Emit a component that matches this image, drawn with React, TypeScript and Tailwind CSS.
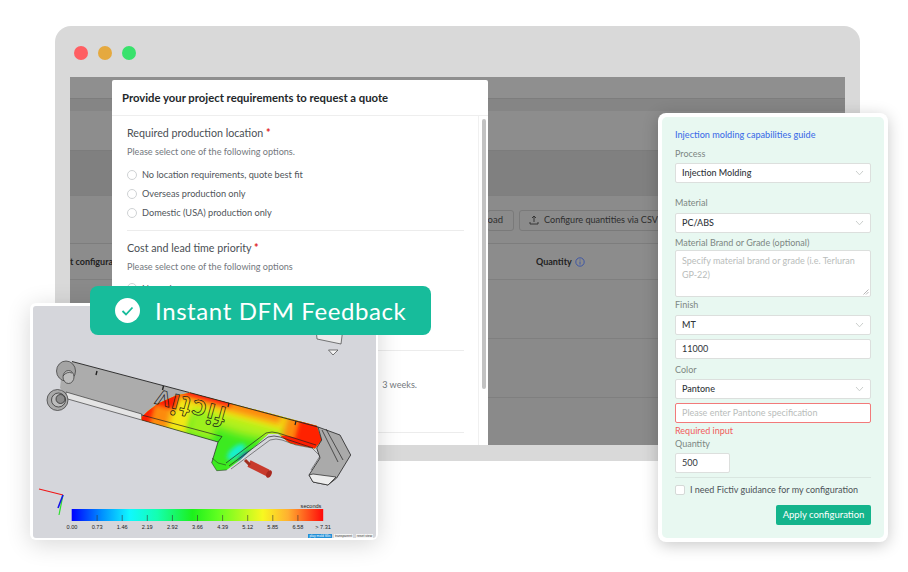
import React from "react";

function Chevron() {
  return (
    <svg width="9" height="6" viewBox="0 0 9 6" className="ml-auto shrink-0">
      <path d="M1 1l3.5 3.8L8 1" fill="none" stroke="#c4c8c6" strokeWidth="0.9" />
    </svg>
  );
}

function Label({ children, className = "" }: { children: React.ReactNode; className?: string }) {
  return <div className={`text-[9px] leading-[12px] text-[#7d8783] ${className}`}>{children}</div>;
}

function Select({ value, className = "" }: { value: string; className?: string }) {
  return (
    <div className={`flex h-[20px] items-center rounded-[2px] border border-[#dcdfdd] bg-white pl-[6px] pr-[6px] text-[9px] font-medium text-[#30353a] ${className}`}>
      <span>{value}</span>
      <Chevron />
    </div>
  );
}

function Radio({ label }: { label: string }) {
  return (
    <div className="flex h-[18.7px] items-center gap-[5px] text-[9.2px] text-[#50555a]">
      <span className="h-[10px] w-[10px] rounded-full border border-[#cfd2d4] bg-white" />
      {label}
    </div>
  );
}

function DfmPart() {
  const heat =
    "M141.7 420 L141.7 417 L148 411 L158 403.5 L176 395.5 L190 392.7 L316.7 425.7 L321.7 440 L315 448.5 L290 443.3 L278.3 434 L268.3 434 L240 460 L226.7 470 L216.7 470.7 L211.7 462.7 L218 442 Z";
  const ticks = Array.from({ length: 9 }, (_, i) => 72 + (i + 1) * 25.1);
  const labels = ["0.00", "0.73", "1.46", "2.19", "2.92", "3.66", "4.39", "5.12", "5.85", "6.58", "> 7.31"];
  return (
    <svg viewBox="33 306 343 232" className="block h-full w-full">
      <defs>
        <clipPath id="heatClip"><path d={heat} /></clipPath>
        <filter id="b5" x="-50%" y="-50%" width="200%" height="200%"><feGaussianBlur stdDeviation="5" /></filter>
        <filter id="b3" x="-50%" y="-50%" width="200%" height="200%"><feGaussianBlur stdDeviation="3" /></filter>
        <filter id="b2" x="-50%" y="-50%" width="200%" height="200%"><feGaussianBlur stdDeviation="2" /></filter>
        <linearGradient id="bar" x1="0" x2="1" y1="0" y2="0">
          <stop offset="0" stopColor="#0000ff" />
          <stop offset="0.12" stopColor="#0090ff" />
          <stop offset="0.23" stopColor="#10f8ff" />
          <stop offset="0.34" stopColor="#14ffb0" />
          <stop offset="0.48" stopColor="#1cf01c" />
          <stop offset="0.58" stopColor="#60ff20" />
          <stop offset="0.76" stopColor="#f8f820" />
          <stop offset="0.86" stopColor="#ffb030" />
          <stop offset="1" stopColor="#ff0a0a" />
        </linearGradient>
      </defs>

      {/* grey plate */}
      <path d="M64 392 L60 388 L62 370 L72 361.5 L190 392.7 L176 395.5 L158 403.5 L148 411 L141.7 417 Z" fill="#acacac" />
      <path d="M66 392 L141.7 414 L141.7 420 L66 398.5 Z" fill="#e4e4e4" stroke="#222" strokeWidth="0.6" />
      <path d="M72 361.5 L190 392.7" stroke="#222" strokeWidth="0.9" fill="none" />
      {/* lugs */}
      <ellipse cx="66" cy="371" rx="9.5" ry="10" fill="#a4a4a4" stroke="#333" strokeWidth="0.7" />
      <ellipse cx="68.5" cy="377" rx="5.5" ry="6.5" fill="#bdbdbd" stroke="#333" strokeWidth="0.7" />
      <path d="M63 376 q4 -5 9 -3" fill="none" stroke="#444" strokeWidth="0.8" />
      <ellipse cx="57.5" cy="400" rx="10.5" ry="10.5" fill="#a9a9a9" stroke="#333" strokeWidth="0.7" />
      <ellipse cx="58.5" cy="400" rx="7" ry="7" fill="#bcbcbc" stroke="#222" strokeWidth="0.7" />
      <ellipse cx="60.5" cy="399" rx="4.5" ry="4.5" fill="#8c8c8c" stroke="#222" strokeWidth="0.7" />
      <path d="M97 371 l-1 4 M163.5 386 l-1 4" stroke="#222" strokeWidth="1.4" />

      {/* heat map, drawn in plate-aligned coordinates */}
      <g clipPath="url(#heatClip)">
        <rect x="130" y="385" width="200" height="95" fill="#3cea20" />
        <g transform="translate(190 393) rotate(15)">
          <ellipse cx="60" cy="12" rx="62" ry="15" fill="#b4f01c" filter="url(#b5)" />
          <rect x="-30" y="-10" width="135" height="22" fill="#f2e814" filter="url(#b3)" />
          <rect x="-55" y="-5" width="63" height="48" fill="#f2e814" filter="url(#b3)" />
          <rect x="8" y="18" width="26" height="22" fill="#9cf01c" filter="url(#b3)" />
          <rect x="-55" y="5" width="42" height="38" fill="#fd8a10" filter="url(#b3)" />
          <rect x="-30" y="-8" width="125" height="15" fill="#fd8a10" filter="url(#b3)" />
          <rect x="-30" y="-8" width="72" height="11" fill="#ff2208" filter="url(#b2)" />
          <rect x="-55" y="-5" width="45" height="25" fill="#ff1a06" filter="url(#b2)" />
          <rect x="-55" y="15" width="24" height="28" fill="#ff1a06" filter="url(#b2)" />
          <rect x="100" y="-10" width="40" height="50" fill="#fd8a10" filter="url(#b3)" />
          <rect x="113" y="-10" width="30" height="50" fill="#ff2206" filter="url(#b2)" />
        </g>
        <ellipse cx="236" cy="452" rx="11" ry="5" fill="#18f0d0" filter="url(#b2)" transform="rotate(-40 236 452)" />
        <ellipse cx="245" cy="457" rx="8" ry="3" fill="#0a50f0" filter="url(#b2)" transform="rotate(-40 245 457)" />
        <ellipse cx="296" cy="441" rx="18" ry="3" fill="#ff1c00" transform="rotate(14 296 441)" />
      </g>
      <path d="M190 392.7 L318 427" stroke="#222" strokeWidth="0.9" fill="none" />
      <path d="M141.7 415 L222 436.5 M141.7 420 L218 442 M222 436.5 L218 442 L211.7 462.7" stroke="#222" strokeWidth="0.7" fill="none" />
      <path d="M211.7 462.7 L216.7 470.7 L226.7 470 M212 458 L218 463 L226 465" stroke="#222" strokeWidth="0.5" fill="none" />
      <path d="M226 463 L266 433 Q272 431 278 433 L316 445" stroke="#222" strokeWidth="0.7" fill="none" />
      <path d="M229 466 L268 437 Q274 435 280 437 L313 448" stroke="#222" strokeWidth="0.7" fill="none" />
      <path d="M231 469 L270 440 Q276 438 282 440 L296 445" stroke="#222" strokeWidth="0.5" fill="none" />
      <path d="M229 403 l-1 4 M296 421 l-1 4" stroke="#222" strokeWidth="1.2" />

      {/* logo */}
      <g transform="translate(190 407) rotate(195)">
        <text x="0" y="9" textAnchor="middle" fontFamily="Lato, sans-serif" fontWeight="700" fontSize="29" letterSpacing="1.5" fill="none" stroke="#1a1a1a" strokeWidth="0.7">fictiv</text>
      </g>

      {/* gate */}
      <path d="M249 463.5 L268 473" stroke="#c83a2c" strokeWidth="7" />
      <ellipse cx="269" cy="474" rx="2.5" ry="4" fill="#a8281e" transform="rotate(25 269 474)" />
      <path d="M245 460 L250 465" stroke="#a03020" strokeWidth="3" />

      {/* right grey hook */}
      <path d="M318 427 L340 435 L350.7 455 L336.7 478 L328 485 L313 482 L309 475 L320 458 L316.7 448 L321.7 440 Z" fill="#aaaaaa" stroke="#222" strokeWidth="0.8" />
      <path d="M326 429 L343 460 M322 430 L338 462" stroke="#222" strokeWidth="0.7" fill="none" />
      <path d="M309 475 L313 482 L328 485 L336 477 L313 474 Z" fill="#ededed" stroke="#222" strokeWidth="0.7" />
      <path d="M296 445 L312 448 L320 456 L311 470" fill="none" stroke="#444" strokeWidth="0.6" />

      {/* view cube */}
      <path d="M316 328 L343 328 L341 344 L317 339 Z" fill="#ebebeb" stroke="#444" strokeWidth="0.7" />
      <path d="M328.5 350 L338 350 L333 355 Z" fill="#f4f4f4" stroke="#444" strokeWidth="0.7" />

      {/* axes */}
      <path d="M39 489 L63 495" stroke="#f01414" strokeWidth="1.2" />
      <path d="M63 495 L59 515" stroke="#2ee02e" strokeWidth="1.2" />
      <path d="M63 495 L58 508" stroke="#1414e8" strokeWidth="1.6" />

      {/* colour scale */}
      <rect x="71.7" y="509" width="251.5" height="12" fill="url(#bar)" />
      {ticks.map((x) => (
        <line key={x} x1={x} x2={x} y1="515" y2="521" stroke="#333" strokeWidth="0.6" />
      ))}
      {labels.map((t, i) => (
        <text key={t} x={72 + i * 25.1} y="529" textAnchor="middle" fontFamily="Liberation Sans, sans-serif" fontSize="5.6" fill="#222">{t}</text>
      ))}
      <text x="311" y="508" textAnchor="middle" fontFamily="Liberation Sans, sans-serif" fontSize="5.6" fill="#222">seconds</text>

      {/* buttons */}
      <rect x="308" y="534" width="24" height="4" fill="#2390d8" />
      <text x="320" y="537.3" textAnchor="middle" fontFamily="Liberation Sans, sans-serif" fontSize="3.4" fill="#fff">play mold fillis</text>
      <rect x="334" y="534" width="19" height="4" fill="#f5f5f5" />
      <text x="343.5" y="537.3" textAnchor="middle" fontFamily="Liberation Sans, sans-serif" fontSize="3.4" fill="#333">transparent</text>
      <rect x="356" y="534" width="17" height="4" fill="#f5f5f5" />
      <text x="364.5" y="537.3" textAnchor="middle" fontFamily="Liberation Sans, sans-serif" fontSize="3.4" fill="#333">reset view</text>
    </svg>
  );
}

export default function App() {
  return (
    <div className="relative h-[572px] w-[908px] overflow-hidden bg-white font-['Lato','Noto_Sans',sans-serif]">
      {/* Browser window */}
      <div className="absolute left-[55px] top-[26px] flex h-[435px] w-[805px] flex-col rounded-t-[16px] bg-[#d9d9d9] px-[15px]">
        <div className="flex h-[51px] shrink-0 items-center gap-[10px] pl-[4px] pt-[3px]">
          <span className="h-[14px] w-[14px] rounded-full bg-[#ff5f63]" />
          <span className="h-[14px] w-[14px] rounded-full bg-[#e5a93f]" />
          <span className="h-[14px] w-[14px] rounded-full bg-[#39e26c]" />
        </div>
        <div className="flex h-[368px] flex-col text-[#222]">
          <div className="h-[22px] border-b border-[#7d7d7d] bg-[#8f8f8f]" />
          <div className="h-[12px] bg-[#858585]" />
          <div className="h-[40px] border-b border-[#7c7c7c] bg-[#8d8d8d]" />
          <div className="h-[45px] border-b border-[#7f7f7f] bg-[#808080]" />
          <div className="flex h-[48px] items-center justify-end border-b border-[#7d7d7d] bg-[#8b8b8b] pt-[1px]">
            <div className="mr-[5px] flex h-[21px] items-center rounded-[3px] border border-[#7a7a7a] pr-[10px] text-[9.5px] text-[#2e2e2e]">oad</div>
            <div className="flex h-[21px] w-[326px] items-center gap-[5px] rounded-l-[3px] border border-[#7a7a7a] pl-[9px] text-[9.1px] text-[#2e2e2e]">
              <svg width="10" height="10" viewBox="0 0 10 10" fill="none" stroke="#2e2e2e" strokeWidth="0.9">
                <path d="M5 7V1.5M3 3l2-2 2 2M1 7v2h8V7" />
              </svg>
              Configure quantities via CSV
            </div>
          </div>
          <div className="flex h-[36px] items-center border-b border-[#7f7f7f] bg-[#8c8c8c] pt-[1px] text-[9px] font-bold text-[#222]">
            <span className="w-[466px] overflow-hidden whitespace-nowrap">t configuration</span>
            <span>Quantity</span>
            <svg width="10" height="10" viewBox="0 0 10 10" className="ml-[3px]" fill="none" stroke="#3550a8" strokeWidth="0.9">
              <circle cx="5" cy="5" r="4.2" />
              <path d="M5 4.5V7.5M5 2.5v1" />
            </svg>
          </div>
          <div className="h-[59px] border-b border-[#7f7f7f] bg-[#8a8a8a]" />
          <div className="h-[59px] border-b border-[#7f7f7f] bg-[#8a8a8a]" />
          <div className="h-[47px] bg-[#8a8a8a]" />
        </div>
      </div>

      {/* Quote modal */}
      <div className="absolute left-[112px] top-[80px] flex h-[365px] w-[376px] flex-col rounded-t-[2px] bg-white">
        <div className="flex h-[36px] shrink-0 items-center border-b border-[#eeeeee] pl-[10px] pt-[1px] text-[11.3px] font-bold text-[#23272a]">
          Provide your project requirements to request a quote
        </div>
        <div className="flex min-h-0 flex-1">
          <div className="min-w-0 flex-1 pl-[15px] pr-[14px] pt-[10px]">
            <div className="text-[10.7px] leading-[14px] text-[#4a4f54]">
              Required production location <span className="font-bold text-[#e02020]">*</span>
            </div>
            <div className="mt-[5px] text-[9.1px] leading-[14px] text-[#74797e]">Please select one of the following options.</div>
            <div className="mt-[7px]">
              <Radio label="No location requirements, quote best fit" />
              <Radio label="Overseas production only" />
              <Radio label="Domestic (USA) production only" />
            </div>
            <div className="mt-[8px] h-px bg-[#ececec]" />
            <div className="mt-[10px] text-[10.7px] leading-[14px] text-[#4a4f54]">
              Cost and lead time priority <span className="font-bold text-[#e02020]">*</span>
            </div>
            <div className="mt-[5px] text-[9.1px] leading-[14px] text-[#74797e]">Please select one of the following options</div>
            <div className="mt-[5px]"><Radio label="Normal" /></div>
            <div className="mt-[52px] h-px bg-[#ececec]" />
            <div className="mt-[27px] text-right text-[9.1px] leading-[14px] text-[#74797e] pr-[47px]">3 weeks.</div>
            <div className="mt-[40px] h-px bg-[#ececec]" />
          </div>
          <div className="w-[10px] shrink-0 border-l border-[#f0f0f0] pl-[3px] pt-[3px]">
            <div className="h-[270px] w-[4px] rounded-full bg-[#c2c2c2]" />
          </div>
        </div>
      </div>

      {/* DFM preview */}
      <div className="absolute left-[30px] top-[303px] h-[237px] w-[348px] rounded-[6px] bg-white p-[3px] shadow-[0_4px_24px_rgba(0,0,0,0.16)]">
        <div className="h-[232px] w-[343px] overflow-hidden rounded-[3px] bg-[#d5d6db]">
          <DfmPart />
        </div>
      </div>

      {/* Badge */}
      <div className="absolute left-[90px] top-[286px] flex h-[49px] w-[341px] items-center gap-[15px] rounded-[8px] bg-[#17bc9b] pl-[25px] text-[24px] font-normal tracking-[0.6px] text-white">
        <span className="flex h-[25px] w-[25px] items-center justify-center rounded-full bg-white">
          <svg width="13" height="10" viewBox="0 0 13 10" fill="none" stroke="#17bc9b" strokeWidth="1.8">
            <path d="M1.5 5l3.5 3.5L11.5 1.5" />
          </svg>
        </span>
        Instant DFM Feedback
      </div>

      {/* Configuration panel */}
      <div className="absolute left-[658px] top-[113px] h-[429px] w-[230px] rounded-[8px] bg-white p-[4px] shadow-[0_3px_16px_rgba(0,0,0,0.22)]">
        <div className="flex h-[421px] flex-col rounded-[5px] bg-[#e8f8f1] pl-[13px] pr-[13px] pt-[12px]">
          <div className="text-[9.1px] font-medium leading-[12px] text-[#3f6fe8]">Injection molding capabilities guide</div>
          <Label className="mt-[7px]">Process</Label>
          <Select value="Injection Molding" className="mt-[3px]" />
          <Label className="mt-[14px]">Material</Label>
          <Select value="PC/ABS" className="mt-[4px]" />
          <Label className="mt-[4px]">Material Brand or Grade (optional)</Label>
          <div className="relative mt-[1px] h-[47px] rounded-[2px] border border-[#dcdfdd] bg-white pl-[6px] pr-[4px] pt-[3px] text-[9px] leading-[13.5px] text-[#b9bdbb]">
            Specify material brand or grade (i.e. Terluran GP-22)
            <svg width="6" height="6" viewBox="0 0 6 6" className="absolute bottom-px right-px" stroke="#888" strokeWidth="0.6">
              <path d="M0.5 5.5L5.5 0.5M3 5.5L5.5 3" />
            </svg>
          </div>
          <Label className="mt-[2px]">Finish</Label>
          <Select value="MT" className="mt-[4px]" />
          <div className="mt-[4px] flex h-[20px] items-center rounded-[2px] border border-[#dcdfdd] bg-white pl-[6px] text-[9px] text-[#30353a]">11000</div>
          <Label className="mt-[5px]">Color</Label>
          <Select value="Pantone" className="mt-[3px]" />
          <div className="mt-[4px] flex h-[20px] items-center rounded-[2px] border border-[#f27a7a] bg-white pl-[6px] text-[9px] text-[#b9bdbb]">Please enter Pantone specification</div>
          <div className="mt-[1px] text-[9px] leading-[13px] text-[#f25c5c]">Required input</div>
          <Label className="mt-[1px]">Quantity</Label>
          <div className="mt-[3px] flex h-[20px] w-[55px] items-center rounded-[2px] border border-[#dcdfdd] bg-white pl-[6px] text-[9px] text-[#30353a]">500</div>
          <div className="mt-[4px] h-px bg-[#d9e6e0]" />
          <div className="mt-[6px] flex h-[12px] items-center gap-[5px] text-[9px] text-[#4d5358]">
            <span className="h-[10px] w-[10px] rounded-[2px] border border-[#d5d9d7] bg-white" />
            I need Fictiv guidance for my configuration
          </div>
          <div className="mt-[9px] flex justify-end">
            <div className="flex h-[20px] w-[95px] items-center justify-center rounded-[2px] bg-[#14b48c] text-[9.5px] text-white">Apply configuration</div>
          </div>
        </div>
      </div>
    </div>
  );
}
